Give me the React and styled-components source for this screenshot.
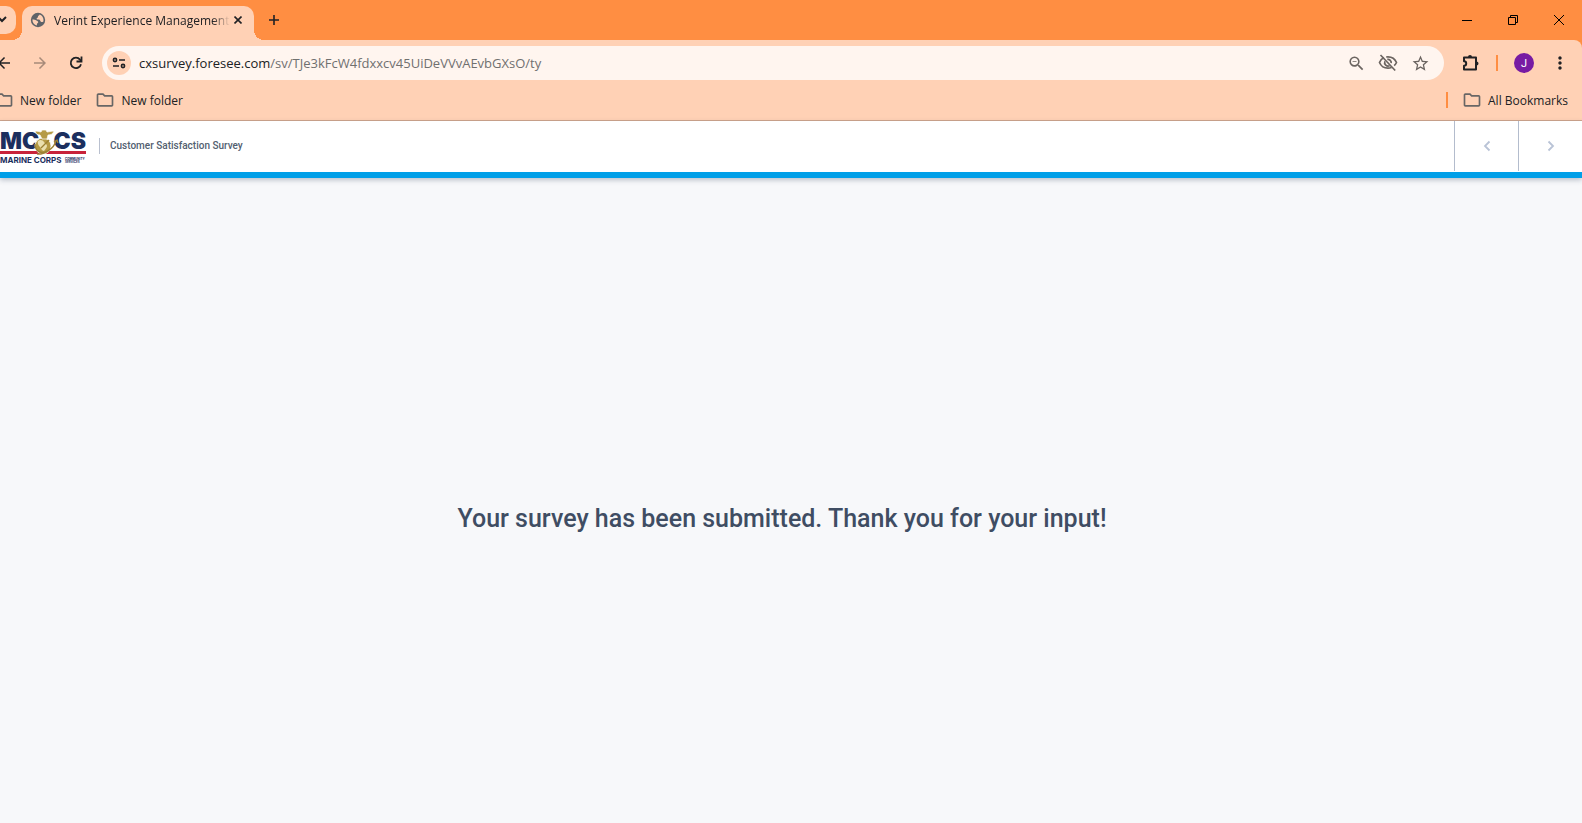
import React from 'react';
import styled, { createGlobalStyle } from 'styled-components';
import { MdArrowBack, MdArrowForward, MdMoreVert, MdOutlineFolder, MdStarBorder, MdZoomOut } from 'react-icons/md';

const App = () => (
  <>
    <GlobalStyle />
    <Window>
      <TabStrip>
        <TabSearch aria-label="Search tabs">
          <svg width="10" height="10" viewBox="0 0 10 10" fill="none" stroke="#202124" strokeWidth="2">
            <path d="M2 3l3 3 4-4" />
          </svg>
        </TabSearch>
        <Tab>
          <GlobeIcon />
          <TabTitle>Verint Experience Management</TabTitle>
          <TabButton aria-label="Close tab">
            <svg width="8" height="8" viewBox="0 0 8 8" stroke="#202124" strokeWidth="1.6">
              <path d="M0.5 0.5l7 7M7.5 0.5l-7 7" />
            </svg>
          </TabButton>
        </Tab>
        <NewTab aria-label="New tab">
          <svg width="12" height="12" viewBox="0 0 12 12" stroke="#202124" strokeWidth="1.6">
            <path d="M6 1v10M1 6h10" />
          </svg>
        </NewTab>
        <WindowButtons>
          <WindowButton aria-label="Minimize">
            <svg width="10" height="10" viewBox="0 0 10 10" stroke="#000">
              <path d="M0 5.5h10" />
            </svg>
          </WindowButton>
          <WindowButton aria-label="Restore">
            <svg width="10" height="10" viewBox="0 0 10 10" fill="none" stroke="#000">
              <path d="M0.5 2.5h7v7h-7zM2.5 2.5v-2h7v7h-2" />
            </svg>
          </WindowButton>
          <WindowButton aria-label="Close">
            <svg width="10" height="10" viewBox="0 0 10 10" stroke="#000">
              <path d="M0 0l10 10M10 0L0 10" />
            </svg>
          </WindowButton>
        </WindowButtons>
      </TabStrip>

      <Toolbar>
        <AddressRow>
          <NavButtons>
            <IconButton aria-label="Back">
              <MdArrowBack size={18} />
            </IconButton>
            <IconButton aria-label="Forward" $faded>
              <MdArrowForward size={18} />
            </IconButton>
            <IconButton aria-label="Reload">
              <svg width="14" height="14" viewBox="0 0 14 14" fill="none" stroke="currentColor" strokeWidth="1.8">
                <path d="M12 8.2A5.2 5.2 0 1 1 11 3.6L12.4 5" />
                <path d="M12.5 0.5V5.5H7.5" />
              </svg>
            </IconButton>
          </NavButtons>
          <AddressBar>
            <SiteInfo aria-label="View site information">
              <svg width="14" height="12" viewBox="0 0 14 12" fill="none" stroke="#202124" strokeWidth="1.6">
                <circle cx="3" cy="3" r="1.6" />
                <path d="M7 3h6M1 9h6" />
                <circle cx="11" cy="9" r="1.6" />
              </svg>
            </SiteInfo>
            <Url>
              <strong>cxsurvey.foresee.com</strong>/sv/TJe3kFcW4fdxxcv45UiDeVVvAEvbGXsO/ty
            </Url>
            <AddressActions>
              <IconButton aria-label="Zoom" $muted>
                <MdZoomOut size={19} />
              </IconButton>
              <IconButton aria-label="Third-party cookies blocked" $muted>
                <EyeOffIcon />
              </IconButton>
              <IconButton aria-label="Bookmark this tab" $muted>
                <MdStarBorder size={19} />
              </IconButton>
            </AddressActions>
          </AddressBar>
          <BrowserActions>
            <IconButton aria-label="Extensions">
              <ExtensionIcon />
            </IconButton>
            <Divider />
            <Avatar aria-label="Profile J">J</Avatar>
            <IconButton aria-label="Menu">
              <MdMoreVert size={20} />
            </IconButton>
          </BrowserActions>
        </AddressRow>

        <BookmarkRow>
          <Bookmarks>
            <Bookmark href="#">
              <MdOutlineFolder size={20} />
              New folder
            </Bookmark>
            <Bookmark href="#">
              <MdOutlineFolder size={20} />
              New folder
            </Bookmark>
          </Bookmarks>
          <AllBookmarks>
            <Divider />
            <Bookmark href="#">
              <MdOutlineFolder size={20} />
              All Bookmarks
            </Bookmark>
          </AllBookmarks>
        </BookmarkRow>
      </Toolbar>

      <SurveyHeader>
        <Logo />
        <SurveyTitle>Customer Satisfaction Survey</SurveyTitle>
        <Pager>
          <PagerButton aria-label="Previous">
            <svg width="8" height="12" viewBox="0 0 8 12" fill="none" stroke="#b9c3d6" strokeWidth="1.8">
              <path d="M6.5 1.5L2 6l4.5 4.5" />
            </svg>
          </PagerButton>
          <PagerButton aria-label="Next">
            <svg width="8" height="12" viewBox="0 0 8 12" fill="none" stroke="#b9c3d6" strokeWidth="1.8">
              <path d="M1.5 1.5L6 6l-4.5 4.5" />
            </svg>
          </PagerButton>
        </Pager>
      </SurveyHeader>
      <Main>
        <Message>Your survey has been submitted. Thank you for your input!</Message>
      </Main>
    </Window>
  </>
);

export default App;

const GlobeIcon = () => (
  <svg width="16" height="16" viewBox="0 0 16 16">
    <circle cx="8" cy="8" r="7.2" fill="#5f6368" />
    <path
      d="M2.4 7.6c1.6 0 3 .2 4 1 .8.6 1.8.6 1.8 1.6 0 .8-1 .9-1.2 1.6l-.2 1.8C4.3 13 2.3 10.7 2.4 7.6z"
      fill="#ffd1b5"
    />
    <path
      d="M9.6 2.6c-.1 1-1.3 1.1-1.6 1.8-.2.6-.1 1.2-.8 1.5-.5.3-.9.8-.3 1.3.8.6 1.9 0 2.7.6.7.5.6 1.4 1.3 1.9.7.5 1.700.2 2.500-.3C14 6.500 12.400 3.600 9.600 2.600z"
      fill="#ffd1b5"
    />
  </svg>
);

const EyeOffIcon = () => (
  <svg width="20" height="18" viewBox="0 0 20 18" fill="none" stroke="currentColor" strokeWidth="1.7">
    <path d="M6 3.5C3.8 4.6 2.3 6.5 1.5 8.5c1.4 3.3 4.6 5.7 8.5 5.7 1.3 0 2.5-.3 3.6-.7" />
    <path d="M8.2 3c.6-.1 1.2-.2 1.8-.2 3.9 0 7.1 2.4 8.5 5.7-.5 1.2-1.3 2.3-2.3 3.2" />
    <path d="M6.9 7.2a3.5 3.5 0 0 0 4.7 4.5M9.3 5.4a3.3 3.3 0 0 1 3.9 3.8" />
    <path d="M2.5 1l14.7 15.5" />
  </svg>
);

const ExtensionIcon = () => (
  <svg width="18" height="18" viewBox="0 0 18 18">
    <path
      d="M3 3.5h12v12H3v-3.800a2.200 2.200 0 0 0 0-4.400z"
      fill="none"
      stroke="currentColor"
      strokeWidth="2"
      strokeLinejoin="round"
    />
    <path d="M7 3a2 2 0 0 1 4 0zM15.500 7.500a2 2 0 0 1 0 4z" fill="currentColor" />
  </svg>
);

const Logo = () => (
  <svg width="86" height="40" viewBox="0 -2 86 40" role="img" aria-label="MCCS Marine Corps Community Services">
    <g fill="#1c2f5e" fontFamily="Inter, 'Liberation Sans', sans-serif">
      <text x="0" y="21" fontSize="23" fontWeight="900">MC</text>
      <text x="86" y="21" fontSize="23" fontWeight="900" textAnchor="end">CS</text>
      <text x="0" y="35" fontSize="8" fontWeight="700">MARINE CORPS</text>
      <text x="65" y="32" fontSize="3" fontWeight="700">COMMUNITY</text>
      <text x="65" y="35" fontSize="3" fontWeight="700">SERVICES</text>
    </g>
    <path d="M0 23h86v3H0z" fill="#c8233a" />
    <g stroke="#fff" strokeWidth=".7">
      <circle cx="43" cy="18" r="8" fill="#b59a45" />
      <path d="M35 3c3 0 5 1 6 1l1-2h4l1 2c2 0 4-1 7-1-1 3-3 4-6 4l-1 4h-5l-2-4c-3 0-4-1-5-4z" fill="#b59a45" />
    </g>
    <path d="M38 13c2-2 5-1 6 1s3 2 3 4-2 3-3 5c-2 0-3-3-4-4s-3-4-2-6z" fill="#eadfae" />
    <path
      d="M35 16c0 8 7 10 12 7M37 26c6 1 17-5 19-13M54 14l3-2 1 3M41 20l8-8"
      fill="none"
      stroke="#9c8133"
      strokeWidth="1.3"
    />
  </svg>
);

const GlobalStyle = createGlobalStyle`
  * {
    box-sizing: border-box;
  }

  body {
    margin: 0;
    background: #f7f8fa;
    font-family: 'Open Sans', 'Noto Sans', sans-serif;
    font-size: 12px;
    color: #202124;
  }

  button {
    display: flex;
    align-items: center;
    justify-content: center;
    flex-shrink: 0;
    padding: 0;
    border: 0;
    background: none;
    color: inherit;
    font: inherit;
  }

  svg {
    flex-shrink: 0;
  }
`;

const Window = styled.div`
  display: flex;
  flex-direction: column;
  min-height: 100vh;
  overflow: hidden;
`;

const TabStrip = styled.div`
  display: flex;
  align-items: center;
  height: 40px;
  background: #ff8e42;
`;

const TabSearch = styled.button`
  && {
    width: 28px;
    height: 28px;
    margin-left: -12px;
    border-radius: 10px;
    background: #ffd1b5;
  }
`;

const Tab = styled.div`
  position: relative;
  display: flex;
  align-items: center;
  align-self: flex-end;
  width: 232px;
  height: 34px;
  margin-left: 6px;
  padding: 0 8px 6px;
  border-radius: 10px 10px 0 0;
  background: #ffd1b5;

  &::before,
  &::after {
    content: '';
    position: absolute;
    bottom: 0;
    width: 10px;
    height: 10px;
  }

  &::before {
    right: 100%;
    background: radial-gradient(circle at 0 0, transparent 10px, #ffd1b5 10px);
  }

  &::after {
    left: 100%;
    background: radial-gradient(circle at 100% 0, transparent 10px, #ffd1b5 10px);
  }
`;

const TabTitle = styled.span`
  flex: 1;
  margin-left: 8px;
  overflow: hidden;
  white-space: nowrap;
  mask-image: linear-gradient(to right, #000 90%, transparent);
`;

const TabButton = styled.button`
  width: 16px;
  height: 16px;
`;

const NewTab = styled.button`
  width: 28px;
  height: 28px;
  margin-left: 6px;
`;

const WindowButtons = styled.div`
  display: flex;
  margin-left: auto;
`;

const WindowButton = styled.button`
  width: 46px;
  height: 40px;
`;

const Toolbar = styled.div`
  border-bottom: 1px solid #cfa58d;
  background: linear-gradient(#ff8e42, #ff8e42) top / 100% 8px no-repeat;
`;

const AddressRow = styled.div`
  display: flex;
  align-items: center;
  gap: 16px;
  padding: 6px 12px 0 0;
  border-top-right-radius: 8px;
  background: #ffd1b5;
`;

const NavButtons = styled.div`
  display: flex;
  gap: 16px;
  margin-left: -6px;
`;

const IconButton = styled.button`
  && {
    width: 20px;
    height: 20px;
    color: ${({ $faded, $muted }) => ($faded ? '#a78a79' : $muted ? '#6b6460' : '#202124')};
  }
`;

const AddressBar = styled.div`
  display: flex;
  flex: 1;
  align-items: center;
  height: 34px;
  padding: 0 14px 0 5px;
  border-radius: 17px;
  background: #fff5ef;
`;

const SiteInfo = styled.button`
  && {
    width: 24px;
    height: 24px;
    border-radius: 50%;
    background: #ffd1b5;
  }
`;

const Url = styled.span`
  flex: 1;
  margin-left: 8px;
  color: #70706f;
  font-size: 13px;

  strong {
    color: #202124;
    font-weight: 400;
  }
`;

const AddressActions = styled.div`
  display: flex;
  gap: 12px;
`;

const BrowserActions = styled.div`
  display: flex;
  align-items: center;
  gap: 16px;
`;

const Divider = styled.span`
  width: 2px;
  height: 16px;
  background: #ff8e42;
`;

const Avatar = styled.button`
  && {
    width: 20px;
    height: 20px;
    border-radius: 50%;
    background: #771ba3;
    color: #fff;
    font-family: Roboto, sans-serif;
    font-size: 11px;
  }
`;

const BookmarkRow = styled.div`
  display: flex;
  align-items: center;
  justify-content: space-between;
  height: 40px;
  padding-right: 14px;
  background: #ffd1b5;
`;

const Bookmarks = styled.div`
  display: flex;
  gap: 14px;
  margin-left: -6px;
`;

const AllBookmarks = styled.div`
  display: flex;
  align-items: center;
  gap: 14px;
`;

const Bookmark = styled.a`
  display: flex;
  align-items: center;
  gap: 6px;
  color: #202124;
  text-decoration: none;

  svg {
    color: #686665;
  }
`;

const SurveyHeader = styled.header`
  display: flex;
  align-items: center;
  height: 57px;
  padding-bottom: 1px;
  border-bottom: 6px solid #009fe8;
  background: #fff;
  box-shadow: 0 2px 5px rgba(40, 60, 90, 0.3);
`;

const SurveyTitle = styled.div`
  margin-left: 13px;
  padding-left: 10px;
  border-left: 1px solid #b9c0cf;
  color: #52606f;
  font-family: Roboto, 'Open Sans', sans-serif;
  font-size: 10px;
  font-weight: 500;
  line-height: 16px;
`;

const Pager = styled.div`
  display: flex;
  align-self: stretch;
  margin-left: auto;
`;

const PagerButton = styled.button`
  && {
    width: 64px;
    border-left: 1px solid #b3bccd;
  }
`;

const Main = styled.main`
  display: flex;
  flex: 1;
  align-items: center;
  justify-content: center;
  padding: 36px 18px 0 0;
`;

const Message = styled.h1`
  margin: 0;
  color: #3f4d63;
  font-family: Roboto, 'Open Sans', sans-serif;
  font-size: 25px;
  font-weight: 500;
  line-height: 32px;
`;
